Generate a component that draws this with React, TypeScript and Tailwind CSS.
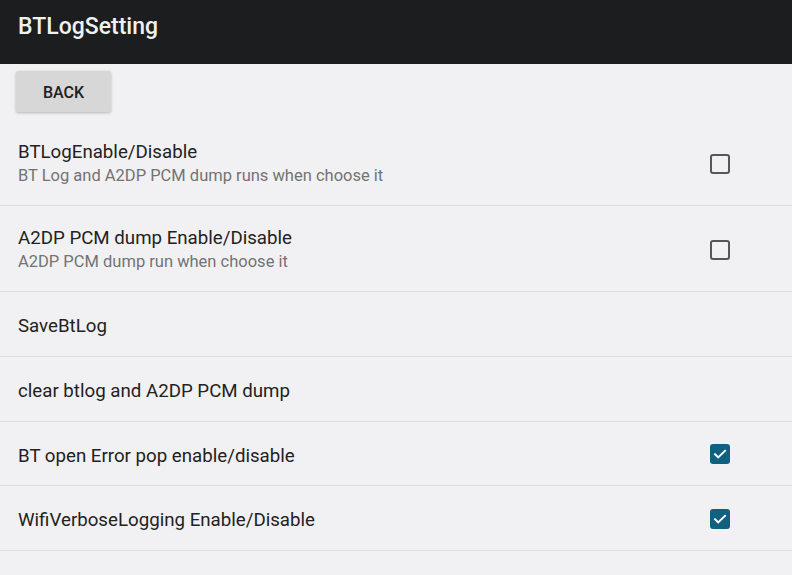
import React from "react";

function Box({ checked }: { checked: boolean }) {
  if (checked) {
    return (
      <div className="w-[20px] h-[20px] rounded-[3px] bg-[#10607f] flex items-center justify-center">
        <svg width="16" height="16" viewBox="0 0 16 16" fill="none">
          <path d="M3 8.3l3.2 3.1L13 4.8" stroke="#ffffff" strokeWidth="2" strokeLinecap="square" />
        </svg>
      </div>
    );
  }
  return <div className="w-[20px] h-[20px] rounded-[3px] border-[2px] border-[#555658]" />;
}

type Row = { title: string; sub?: string; check?: boolean; h: string };

const rows: Row[] = [
  { title: "BTLogEnable/Disable", sub: "BT Log and A2DP PCM dump runs when choose it", check: false, h: "h-[86px]" },
  { title: "A2DP PCM dump Enable/Disable", sub: "A2DP PCM dump run when choose it", check: false, h: "h-[86px]" },
  { title: "SaveBtLog", h: "h-[65px]" },
  { title: "clear btlog and A2DP PCM dump", h: "h-[65px]" },
  { title: "BT open Error pop enable/disable", check: true, h: "h-[64px]" },
  { title: "WifiVerboseLogging Enable/Disable", check: true, h: "h-[65px]" },
];

export default function App() {
  return (
    <div className="w-[792px] h-[575px] overflow-hidden bg-[#f1f1f3] flex flex-col" style={{ fontFamily: "Roboto, 'Noto Sans', sans-serif" }}>
      <div className="h-[64px] bg-[#1c1d1f] flex items-center pl-[18px] pb-[10px] shrink-0">
        <span className="text-[23px] font-medium text-[#f0f0f0]">BTLogSetting</span>
      </div>
      <div className="h-[56px] shrink-0 pl-[16px] pt-[7px]">
        <button className="w-[95px] h-[41px] pt-[3px] bg-[#d7d7d8] rounded-[2px] shadow-[0_1px_3px_rgba(0,0,0,0.25)] text-[16px] font-medium text-[#202020]">
          BACK
        </button>
      </div>
      {rows.map((r, i) => (
        <div key={i} className={`${r.h} shrink-0 flex items-center border-b border-[#dedee0] pl-[18px] pr-[62px] ${r.sub ? "pt-[3px]" : "pt-[4px]"}`}>
          <div className="flex-1 flex flex-col">
            <span className="text-[18.7px] leading-[24px] text-[#222222]">{r.title}</span>
            {r.sub && <span className="text-[16.5px] leading-[24px] text-[#737373]">{r.sub}</span>}
          </div>
          {r.check !== undefined && <div className={r.sub ? "" : "-mt-[3px]"}><Box checked={r.check} /></div>}
        </div>
      ))}
    </div>
  );
}
